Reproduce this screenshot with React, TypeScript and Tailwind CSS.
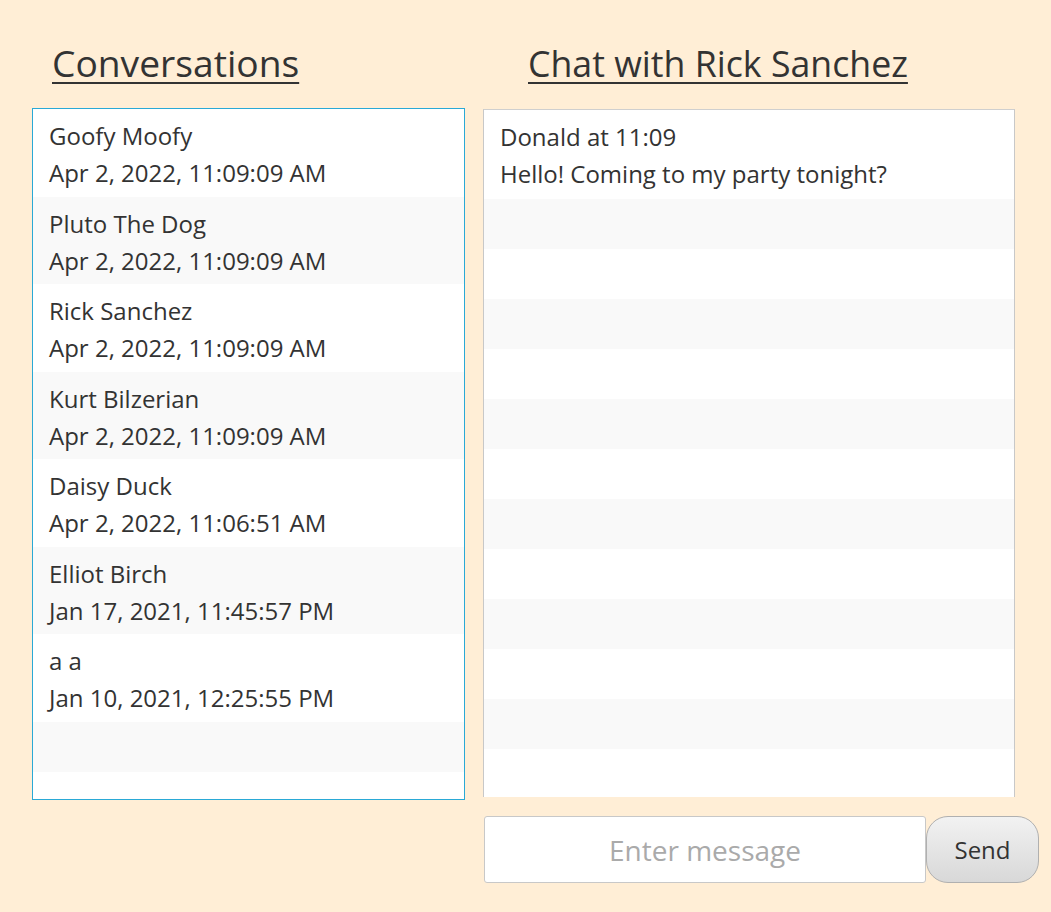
import React from "react";

const convs = [
  ["Goofy Moofy", "Apr 2, 2022, 11:09:09 AM"],
  ["Pluto The Dog", "Apr 2, 2022, 11:09:09 AM"],
  ["Rick Sanchez", "Apr 2, 2022, 11:09:09 AM"],
  ["Kurt Bilzerian", "Apr 2, 2022, 11:09:09 AM"],
  ["Daisy Duck", "Apr 2, 2022, 11:06:51 AM"],
  ["Elliot Birch", "Jan 17, 2021, 11:45:57 PM"],
  ["a a", "Jan 10, 2021, 12:25:55 PM"],
];

const font = { fontFamily: '"Segoe UI", "Open Sans", "Noto Sans", sans-serif' };

export default function App() {
  return (
    <div className="w-[1051px] h-[912px] bg-[#ffeed6] text-[#333333] overflow-hidden" style={font}>
      <div className="flex pl-[32px]">
        {/* Left column */}
        <div className="w-[433px] flex flex-col">
          <div className="h-[108px] pl-[20px] pt-[43px]">
            <span className="text-[37.2px] leading-[40px] underline decoration-2 underline-offset-[5px]">Conversations</span>
          </div>
          <div className="h-[692px] border border-[#2aa9d6] bg-white flex flex-col overflow-hidden">
            {convs.map((c, i) => (
              <div
                key={i}
                className={`h-[87.5px] shrink-0 pl-[16px] pt-[8px] text-[24px] leading-[37px] ${i % 2 === 1 ? "bg-[#f9f9f9]" : "bg-white"}`}
              >
                <div>{c[0]}</div>
                <div>{c[1]}</div>
              </div>
            ))}
            <div className="h-[50px] shrink-0 bg-[#f9f9f9]" />
            <div className="h-[50px] shrink-0 bg-white" />
          </div>
        </div>
        {/* Right column */}
        <div className="ml-[18px] flex flex-col">
          <div className="h-[109px] pl-[45px] pt-[43px]">
            <span className="text-[35.7px] leading-[40px] underline decoration-2 underline-offset-[5px]">Chat with Rick Sanchez</span>
          </div>
          <div className="w-[532px] h-[688px] border border-t-[#cfcfcf] border-x-[#c8c8c8] border-b-0 bg-white flex flex-col overflow-hidden">
            <div className="h-[89px] shrink-0 pl-[16px] pt-[8px] text-[24px] leading-[37px] bg-white">
              <div>Donald at 11:09</div>
              <div>Hello! Coming to my party tonight?</div>
            </div>
            {Array.from({ length: 12 }).map((_, i) => (
              <div key={i} className={`h-[50px] shrink-0 ${i % 2 === 0 ? "bg-[#f9f9f9]" : "bg-white"}`} />
            ))}
          </div>
          <div className="flex mt-[19px] pl-[1px]">
            <div className="w-[442px] h-[67px] bg-white border border-[#c8c8c8] rounded-[3px] flex items-center justify-center text-[28px] text-[#aaaaaa]">
              Enter message
            </div>
            <div className="w-[113px] h-[67px] rounded-[22px] border border-[#b0b0b0] bg-gradient-to-b from-[#f2f2f2] to-[#d8d8d8] flex items-center justify-center text-[24px] text-[#333333]">
              Send
            </div>
          </div>
        </div>
      </div>
    </div>
  );
}
